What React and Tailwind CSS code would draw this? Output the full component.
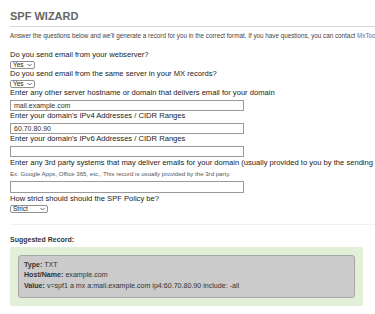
import React from "react";

function Chevron() {
  return (
    <svg width="5" height="4" viewBox="0 0 10 7" className="shrink-0">
      <path d="M1 1.5l4 4 4-4" fill="none" stroke="#444" strokeWidth="1.6" />
    </svg>
  );
}

function FakeSelect({ value, width }) {
  return (
    <div
      className={`mt-[1px] flex h-[8px] items-center justify-between rounded-[2px] border border-[#909090] bg-white pl-[2px] pr-[2px] text-[6.5px] leading-none text-[#222] ${width}`}
    >
      <span>{value}</span>
      <Chevron />
    </div>
  );
}

function Label({ children, className = "" }) {
  return (
    <div className={`h-[10px] whitespace-nowrap text-[7.6px] leading-[10px] text-[#222] ${className}`}>
      {children}
    </div>
  );
}

function TextInput({ value, className = "" }) {
  return (
    <div
      className={`flex h-[11px] w-[234px] items-center border border-[#9a9a9a] bg-white px-[3px] text-[7px] leading-none text-[#333] ${className}`}
    >
      {value}
    </div>
  );
}

export default function App() {
  return (
    <div className="h-[314px] w-[375px] overflow-hidden bg-white font-['Liberation_Sans',Arial,sans-serif]">
      <div className="w-[600px] pl-[10px] pt-[8px]">
        <h1 className="h-[16px] text-[11px] font-bold leading-[16px] text-[#666]">SPF WIZARD</h1>
        <div className="mt-[2px] w-[365px] border-t border-[#d6d6d6]" />

        <p className="mt-[5px] h-[8px] whitespace-nowrap text-[6.3px] leading-[8px] text-[#444]">
          Answer the questions below and we'll generate a record for you in the correct format. If you have
          questions, you can contact <span className="text-[#3b7bc0]">MxToolbox</span>
        </p>

        <Label className="mt-[10px]">Do you send email from your webserver?</Label>
        <FakeSelect value="Yes" width="w-[25px]" />

        <Label>Do you send email from the same server in your MX records?</Label>
        <FakeSelect value="Yes" width="w-[25px]" />

        <Label>Enter any other server hostname or domain that delivers email for your domain</Label>
        <TextInput className="mt-[2px]" value="mail.example.com" />

        <Label>Enter your domain's IPv4 Addresses / CIDR Ranges</Label>
        <TextInput className="mt-[2px]" value="60.70.80.90" />

        <Label>Enter your domain's IPv6 Addresses / CIDR Ranges</Label>
        <TextInput className="mt-[2px]" value="" />

        <Label className="mt-[1px]">
          Enter any 3rd party systems that may deliver emails for your domain (usually provided to you by the
          sending service)
        </Label>
        <p className="mt-[2px] h-[8px] whitespace-nowrap text-[6.1px] leading-[8px] text-[#555]">
          Ex. Google Apps, Office 365, etc., This record is usually provided by the 3rd party.
        </p>
        <TextInput className="mt-[3px] h-[12px]" value="" />

        <Label className="mt-[1px]">How strict should should the SPF Policy be?</Label>
        <FakeSelect value="Strict" width="w-[38px]" />

        <div className="mt-[11px] w-[365px] border-t border-[#f1f1f1]" />

        <div className="mt-[11px] h-[8px] text-[7px] font-bold leading-[8px] text-[#333]">Suggested Record:</div>

        <div className="mt-[3px] w-[353px] rounded-[2px] bg-[#e3f0d9] p-[8px]">
          <div className="rounded-[3px] border border-[#a6a6a6] bg-[#cbcbcb] pb-[6px] pl-[5px] pt-[4px] text-[7.1px] leading-[10.3px] text-[#333]">
            <div>
              <span className="font-bold">Type:</span> TXT
            </div>
            <div>
              <span className="font-bold">Host/Name:</span> example.com
            </div>
            <div>
              <span className="font-bold">Value:</span> v=spf1 a mx a:mail.example.com ip4:60.70.80.90 include: -all
            </div>
          </div>
        </div>
      </div>
    </div>
  );
}
